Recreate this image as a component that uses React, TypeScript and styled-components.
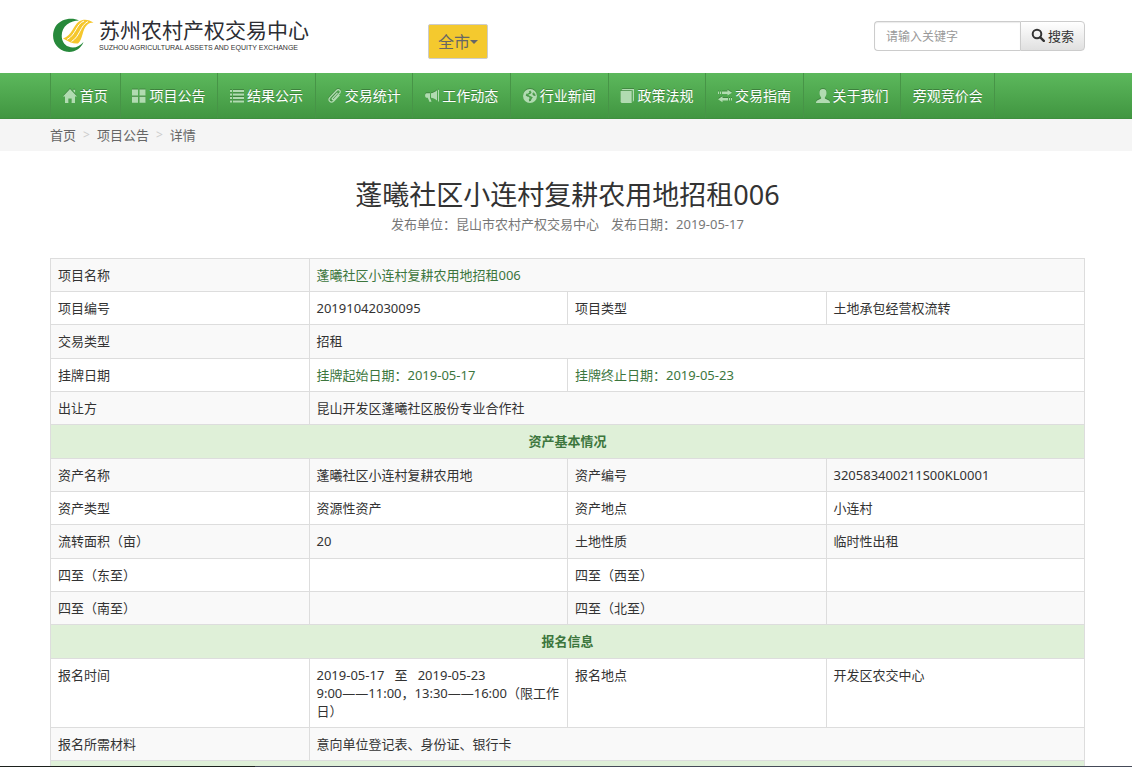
import React from "react";
import styled, { createGlobalStyle } from "styled-components";

const GlobalStyle = createGlobalStyle`
  * { box-sizing: border-box; }
  body {
    margin: 0;
    background: #fff;
    color: #333;
    font: 13px/18px "Noto Sans", "Noto Sans CJK SC", sans-serif;
  }
  input, button { font-family: inherit; }
  a { color: inherit; text-decoration: none; }
`;

const Page = styled.div`
  height: 100vh;
  overflow: hidden;
`;

const Container = styled.div`
  padding: 0 47px 0 50px;
`;

const Header = styled(Container)`
  display: flex;
  justify-content: space-between;
  align-items: flex-start;
  height: 73px;
`;

const Brand = styled.div`
  display: flex;
  align-items: flex-start;
`;

const Logo = styled.a`
  display: flex;
  width: 378px;
  padding: 17px 0 0 2px;
`;

const LogoText = styled.span`
  display: flex;
  flex-direction: column;
  padding-left: 5px;
  white-space: nowrap;
`;

const LogoName = styled.span`
  font-size: 21px;
  line-height: 26px;
  font-weight: 400;
  color: #2c2d33;
`;

const LogoSub = styled.span`
  font: 7px/10px "Liberation Sans", sans-serif;
  color: #333;
`;

const CityButton = styled.button`
  display: flex;
  align-items: center;
  height: 35px;
  margin-top: 24px;
  padding: 0 9px;
  border: 1px solid #ccc;
  border-radius: 2px;
  background: #f4c92e;
  color: #666;
  font-size: 16px;
  line-height: 20px;
`;

const Caret = styled.span`
  border: 4px solid transparent;
  border-top-color: #666;
  border-bottom: 0;
`;

const Search = styled.form`
  display: flex;
  width: 211px;
  height: 30px;
  margin-top: 21px;
`;

const SearchInput = styled.input`
  flex: 1;
  min-width: 0;
  padding: 0 11px;
  border: 1px solid #ccc;
  border-right: 0;
  border-radius: 4px 0 0 4px;
  box-shadow: inset 0 1px 1px rgba(0, 0, 0, 0.08);
  font-size: 12px;
  color: #333;
  &::placeholder { color: #999; opacity: 1; }
`;

const SearchButton = styled.button`
  display: flex;
  align-items: center;
  justify-content: center;
  gap: 3px;
  width: 65px;
  padding: 0 0 2px;
  border: 1px solid #ccc;
  border-radius: 0 4px 4px 0;
  background: linear-gradient(#fff, #e0e0e0);
  color: #333;
  font-size: 13px;
`;

const NavBar = styled.nav`
  height: 46px;
  background: linear-gradient(#5cb85c, #419641);
  border-bottom: 1px solid #3e8f3e;
`;

const NavList = styled.ul`
  display: grid;
  grid-template-columns: 70fr repeat(8, minmax(0, 98fr)) 94fr;
  max-width: 945px;
  margin: 0;
  padding: 0;
  list-style: none;
  border-left: 1px solid #479447;
`;

const NavItem = styled.li`
  border-right: 1px solid #479447;
`;

const NavLink = styled.a`
  display: flex;
  align-items: center;
  justify-content: center;
  gap: 3px;
  height: 45px;
  color: #fff;
  font-size: 14px;
  white-space: nowrap;
  text-shadow: 0 -1px 0 rgba(0, 0, 0, 0.25);
`;

const Icon = styled.svg`
  flex: none;
  width: 14px;
  height: 14px;
  fill: currentColor;
`;

const NavIcon = styled(Icon)`
  color: #b1dbb1;
  filter: drop-shadow(0 -1px 0 rgba(0, 0, 0, 0.2));
`;

const Breadcrumb = styled.nav`
  background: #f5f5f5;
`;

const Crumbs = styled(Container)`
  display: flex;
  gap: 7px;
  line-height: 32px;
  color: #666;
`;

const Sep = styled.span`
  color: #ccc;
  font-size: 12px;
  &:before { content: ">"; }
`;

const Heading = styled.header`
  padding: 26px 0 23px;
  text-align: center;
`;

const Title = styled.h1`
  margin: 0;
  font-size: 27px;
  line-height: 36px;
  font-weight: 400;
`;

const Meta = styled.p`
  display: flex;
  justify-content: center;
  gap: 12px;
  margin: 0;
  line-height: 22px;
  color: #777;
`;

const Table = styled.table`
  width: 100%;
  table-layout: fixed;
  border-collapse: collapse;
`;

const Row = styled.tr`
  height: 33px;
  &:nth-child(3n) { height: 34px; }
  &:nth-child(odd) { background: #f9f9f9; }
  &:nth-child(13) { background: #fff; }
  &:nth-child(14) { background: #f9f9f9; }
`;

const Cell = styled.td<{ $green?: boolean }>`
  padding: 7px;
  border: 1px solid #ddd;
  vertical-align: top;
  white-space: pre-wrap;
  color: ${(p) => (p.$green ? "#3c763d" : "#333")};
`;

const Section = styled.th`
  padding: 7px;
  border: 1px solid #ddd;
  background: #dff0d8;
  color: #3c763d;
  font-weight: 700;
  text-align: center;
  vertical-align: top;
`;

const BottomEdge = styled.div`
  position: fixed;
  inset: auto 0 0 0;
  height: 1px;
  background: linear-gradient(90deg, #1c211d 255px, #454a58 255px);
`;

const icons: Record<string, React.ReactNode> = {
  home: <path d="M7 0 14 7.400h-2V14H8.600V9.500H5.400V14H2V7.400H0L7 0zM10.400.8h1.700v3l-1.700-1.700z" />,
  grid: <path d="M0 .5h6v6H0zM7.500.5h6v6h-6zM0 7.700h6v6H0zM7.500 7.700h6v6h-6z" />,
  list: <path d="M0 1h2v2H0zM3 1h11v2H3zM0 4.500h2v2H0zM3 4.500h11v2H3zM0 8h2v2H0zM3 8h11v2H3zM0 11.500h2v2H0zM3 11.500h11v2H3z" />,
  clip: (
    <path
      d="M9.500 3.800 4.600 9.100c-.9 1 .4 2.200 1.300 1.300l5.700-6.200c2-2.300-1-4.700-3-2.700L2 8.400c-2.600 3 .9 6.300 3.700 3.600l5.800-6.200"
      fill="none"
      stroke="currentColor"
      strokeWidth="1.300"
    />
  ),
  horn: <path d="M13 .8h1v11.600h-1zM12 1.300v10.200C9.800 9.600 8 8.900 6 8.700V4.200c2-.2 4-1 6-2.900zM5 4.300v4.400l1.600 3.800-2 .5L2.700 8.800H1.500C-.4 8.800-.4 4.300 1.500 4.300z" />,
  globe: (
    <path
      fillRule="evenodd"
      d="M7 0a7 7 0 1 1 0 14A7 7 0 0 1 7 0zM7.600 1.500 5.800 2.200 6.300 3.600 4.700 4.800 3.500 4.600 2.700 6.300 4.200 7.500 6 7.800 6.600 9.200 5.800 10.400 6.400 12.500 8 11.600 8.600 9.800 9.800 8.400 8 7.200 6 6.500 5.400 5.600 7.200 5 8.500 3.400zM10.300 3.200 9.300 5 10.400 6.400 12.500 7C12.500 5.200 11.700 4 10.300 3.200z"
    />
  ),
  book: <path d="M2.500 0H14v11.500l-1.200 1.400V1.300H1.300zM.6 2H11.700v12H1.600L.6 13z" />,
  swap: <path d="M0 2.500h1v2.500H0zM2 2.500h1v2.500H2zM4 2.500h5.500V.8L14 3.700 9.500 6.600V5H4zM14 9h-1v2.500h1zM12 9h-1v2.500h1zM10 9H4.500V7.300L0 10.200l4.500 3V11.500H10z" />,
  user: <path d="M7 0c2.500 0 3.700 1.600 3.500 4.200-.1 1.800-.8 3.100-1.600 4v1.300l4 1.900c.8.400 1.100 1.200 1.100 2.600H0c0-1.400.3-2.200 1.100-2.600l4-1.900V8.200c-.8-.9-1.500-2.200-1.600-4C3.300 1.600 4.500 0 7 0z" />,
};

const nav: [string, string][] = [
  ["home", "首页"],
  ["grid", "项目公告"],
  ["list", "结果公示"],
  ["clip", "交易统计"],
  ["horn", "工作动态"],
  ["globe", "行业新闻"],
  ["book", "政策法规"],
  ["swap", "交易指南"],
  ["user", "关于我们"],
  ["", "旁观竞价会"],
];

type RowData = { section?: string; cells?: string[]; green?: boolean };

const rows: RowData[] = [
  { cells: ["项目名称", "蓬曦社区小连村复耕农用地招租006"], green: true },
  { cells: ["项目编号", "20191042030095", "项目类型", "土地承包经营权流转"] },
  { cells: ["交易类型", "招租"] },
  { cells: ["挂牌日期", "挂牌起始日期：2019-05-17", "挂牌终止日期：2019-05-23"], green: true },
  { cells: ["出让方", "昆山开发区蓬曦社区股份专业合作社"] },
  { section: "资产基本情况" },
  { cells: ["资产名称", "蓬曦社区小连村复耕农用地", "资产编号", "320583400211S00KL0001"] },
  { cells: ["资产类型", "资源性资产", "资产地点", "小连村"] },
  { cells: ["流转面积（亩）", "20", "土地性质", "临时性出租"] },
  { cells: ["四至（东至）", "", "四至（西至）", ""] },
  { cells: ["四至（南至）", "", "四至（北至）", ""] },
  { section: "报名信息" },
  {
    cells: [
      "报名时间",
      "2019-05-17\u00a0\u00a0\u00a0至\u00a0\u00a0\u00a02019-05-23\n9:00——11:00，13:30——16:00（限工作日）",
      "报名地点",
      "开发区农交中心",
    ],
  },
  { cells: ["报名所需材料", "意向单位登记表、身份证、银行卡"] },
  { section: "" },
];

export default function App() {
  return (
    <Page lang="zh-CN">
      <GlobalStyle />
      <Header as="header">
        <Brand>
          <Logo href="#">
            <svg width="42" height="36" viewBox="0 0 42 36" aria-hidden="true">
              <path d="M27 3.500C20 .2 9 1.500 3.500 9.500-2.500 20 3 33 15 34.800c8 .8 14-3.300 16.500-9.800-4 5-10 6.800-15 4.600C8 26 7.500 13.500 15 7.500c3.500-2.800 8-3.800 12-4z" fill="#27893b" />
              <path d="M41.500 5.500C37 2.500 31.500 1.500 27 4.500c-6 4.300-6.500 13.500-16 17 6 3.500 10 5.500 15 5 5-4 4-14 9-18.500 2-1.800 4-2.500 6.500-2.500z" fill="#f5c72d" />
              <path d="M32 4c-8 3-8 14-17 18.500M36 4.500c-8 4-8 15-16.500 20" fill="none" stroke="#fff" strokeWidth="1" />
            </svg>
            <LogoText>
              <LogoName>苏州农村产权交易中心</LogoName>
              <LogoSub>SUZHOU AGRICULTURAL ASSETS AND EQUITY EXCHANGE</LogoSub>
            </LogoText>
          </Logo>
          <CityButton type="button">
            全市
            <Caret />
          </CityButton>
        </Brand>
        <Search onSubmit={(e) => e.preventDefault()}>
          <SearchInput type="text" placeholder="请输入关键字" aria-label="请输入关键字" />
          <SearchButton type="submit">
            <Icon viewBox="0 0 14 14" aria-hidden="true">
              <circle cx="6" cy="6" r="4.300" fill="none" stroke="currentColor" strokeWidth="2" />
              <path d="m9.300 9.300 3.500 3.500" stroke="currentColor" strokeWidth="2.400" strokeLinecap="round" />
            </Icon>
            搜索
          </SearchButton>
        </Search>
      </Header>

      <NavBar>
        <Container>
          <NavList>
            {nav.map(([icon, label]) => (
              <NavItem key={label}>
                <NavLink href="#">
                  {icon && (
                    <NavIcon viewBox="0 0 14 14" aria-hidden="true">
                      {icons[icon]}
                    </NavIcon>
                  )}
                  {label}
                </NavLink>
              </NavItem>
            ))}
          </NavList>
        </Container>
      </NavBar>

      <Breadcrumb>
        <Crumbs>
          <a href="#">首页</a>
          <Sep />
          <a href="#">项目公告</a>
          <Sep />
          <span>详情</span>
        </Crumbs>
      </Breadcrumb>

      <Container as="main">
        <Heading>
          <Title>蓬曦社区小连村复耕农用地招租006</Title>
          <Meta>
            <span>发布单位：昆山市农村产权交易中心</span>
            <span>发布日期：2019-05-17</span>
          </Meta>
        </Heading>
        <Table>
          <colgroup>
            <col />
            <col />
            <col />
            <col />
          </colgroup>
          <tbody>
            {rows.map((row, i) => (
              <Row key={i}>
                {row.cells ? (
                  row.cells.map((text, j, all) => (
                    <Cell key={j} $green={row.green && j > 0} colSpan={j === all.length - 1 ? 5 - all.length : 1}>
                      {text}
                    </Cell>
                  ))
                ) : (
                  <Section colSpan={4}>{row.section}</Section>
                )}
              </Row>
            ))}
          </tbody>
        </Table>
      </Container>
      <BottomEdge />
    </Page>
  );
}
